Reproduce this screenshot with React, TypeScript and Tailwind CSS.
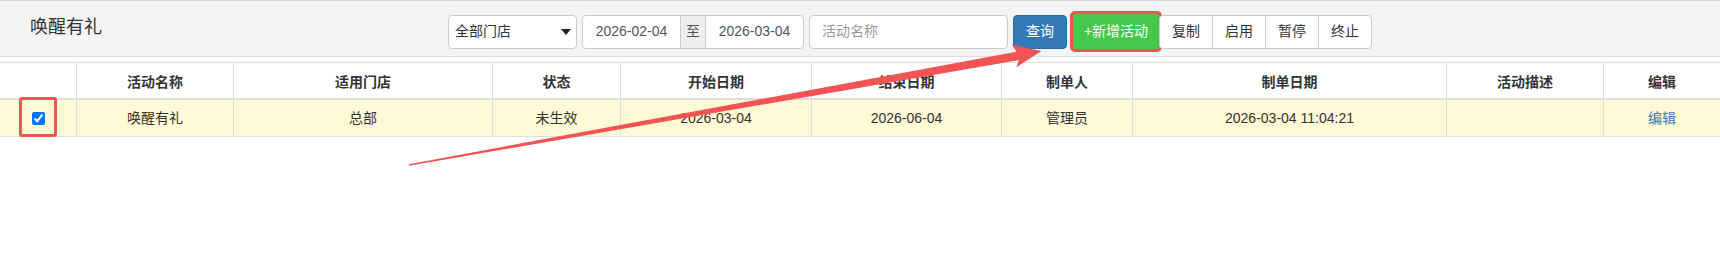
import React from 'react';

const columns = [
  { title: '', width: 'w-[77px]' },
  { title: '活动名称', width: 'w-[157px]' },
  { title: '适用门店', width: 'w-[259px]' },
  { title: '状态', width: 'w-[128px]' },
  { title: '开始日期', width: 'w-[191px]' },
  { title: '结束日期', width: 'w-[190px]' },
  { title: '制单人', width: 'w-[131px]' },
  { title: '制单日期', width: 'w-[314px]' },
  { title: '活动描述', width: 'w-[157px]' },
  { title: '编辑', width: 'w-[116px]' },
];

const row = ['唤醒有礼', '总部', '未生效', '2026-03-04', '2026-06-04', '管理员', '2026-03-04 11:04:21', ''];

// annotation arrow, drawn over the page
const Arrow = () => (
  <svg className="pointer-events-none absolute left-0 top-0" width="1720" height="270" viewBox="0 0 1720 270">
    <polygon
      fill="#f45353"
      points="408.9,164.2 409.1,165.8 1018.8,60.2 1016.4,67.3 1041.5,51 1011.8,44.8 1016.6,51.8"
    />
  </svg>
);

const GroupButton = ({ label, first, last }: { label: string; first?: boolean; last?: boolean }) => (
  <button
    className={`h-[34px] w-[54px] border border-[#ccc] bg-white text-[14px] text-[#333] ${first ? 'rounded-l-[4px]' : '-ml-px'} ${last ? 'rounded-r-[4px]' : ''}`}
  >
    {label}
  </button>
);

export default function App() {
  return (
    <div
      className="relative h-[270px] w-[1720px] overflow-hidden bg-white text-[14px] text-[#333]"
      style={{ fontFamily: '"Liberation Sans", "Noto Sans CJK SC", sans-serif' }}
    >
      {/* title bar */}
      <div className="flex h-[57px] items-start border-y border-[#ddd] bg-[#f4f4f4]">
        <div className="w-[448px] pl-[30px] pt-[13px] text-[18px] leading-[26px] text-[#333]">唤醒有礼</div>
        <div className="flex items-center gap-[5px] pt-[13px]">
          <div className="relative flex h-[34px] w-[129px] items-center rounded-[4px] border border-[#ccc] bg-white pl-[6px]">
            <span>全部门店</span>
            <span className="absolute right-[5px] top-[13px] h-0 w-0 border-x-[5px] border-t-[6px] border-x-transparent border-t-[#222]"></span>
          </div>
          <div className="flex h-[34px] w-[222px] items-stretch">
            <div className="flex w-[99px] items-center justify-center rounded-l-[4px] border border-[#ccc] bg-white text-[#555]">2026-02-04</div>
            <div className="-ml-px flex w-[26px] items-center justify-center border border-[#ccc] bg-[#eee] text-[#555]">至</div>
            <div className="-ml-px flex w-[99px] items-center justify-center rounded-r-[4px] border border-[#ccc] bg-white text-[#555]">2026-03-04</div>
          </div>
          <div className="flex h-[34px] w-[199px] items-center rounded-[4px] border border-[#ccc] bg-white pl-[12px] text-[#999]">活动名称</div>
          <button className="h-[34px] w-[54px] rounded-[4px] border border-[#2e6da4] bg-[#337ab7] text-white">查询</button>
          <button className="ml-px h-[35px] w-[86px] rounded-[2px] bg-[#45c84b] text-white ring-[3px] ring-[#f25454]">+新增活动</button>
          <div className="-ml-[5px] flex">
            <GroupButton label="复制" first />
            <GroupButton label="启用" />
            <GroupButton label="暂停" />
            <GroupButton label="终止" last />
          </div>
        </div>
      </div>

      {/* table */}
      <div className="mt-[5px] border-t border-[#ddd]">
        <div className="flex border-b-2 border-[#ddd]">
          {columns.map((c, i) => (
            <div
              key={i}
              className={`${c.width} h-[35px] pt-[9px] text-center font-bold leading-5 ${i < columns.length - 1 ? 'border-r border-[#ddd]' : ''}`}
            >
              {c.title}
            </div>
          ))}
        </div>
        <div className="flex border-b border-[#ddd] bg-[#fffad6]">
          <div className="relative flex h-[36px] w-[77px] items-center justify-center border-r border-[#ddd]">
            <input type="checkbox" defaultChecked className="h-[13px] w-[13px] accent-[#0075ff]" />
            <span className="absolute left-[19px] top-[-3px] h-[40px] w-[38px] rounded-[3px] border-[3px] border-[#f25454]"></span>
          </div>
          {row.map((v, i) => (
            <div key={i} className={`${columns[i + 1].width} h-[36px] border-r border-[#ddd] py-2 text-center leading-5`}>
              {v}
            </div>
          ))}
          <div className="h-[36px] w-[116px] py-2 text-center leading-5 text-[#337ab7]">编辑</div>
        </div>
      </div>

      <Arrow />
    </div>
  );
}
